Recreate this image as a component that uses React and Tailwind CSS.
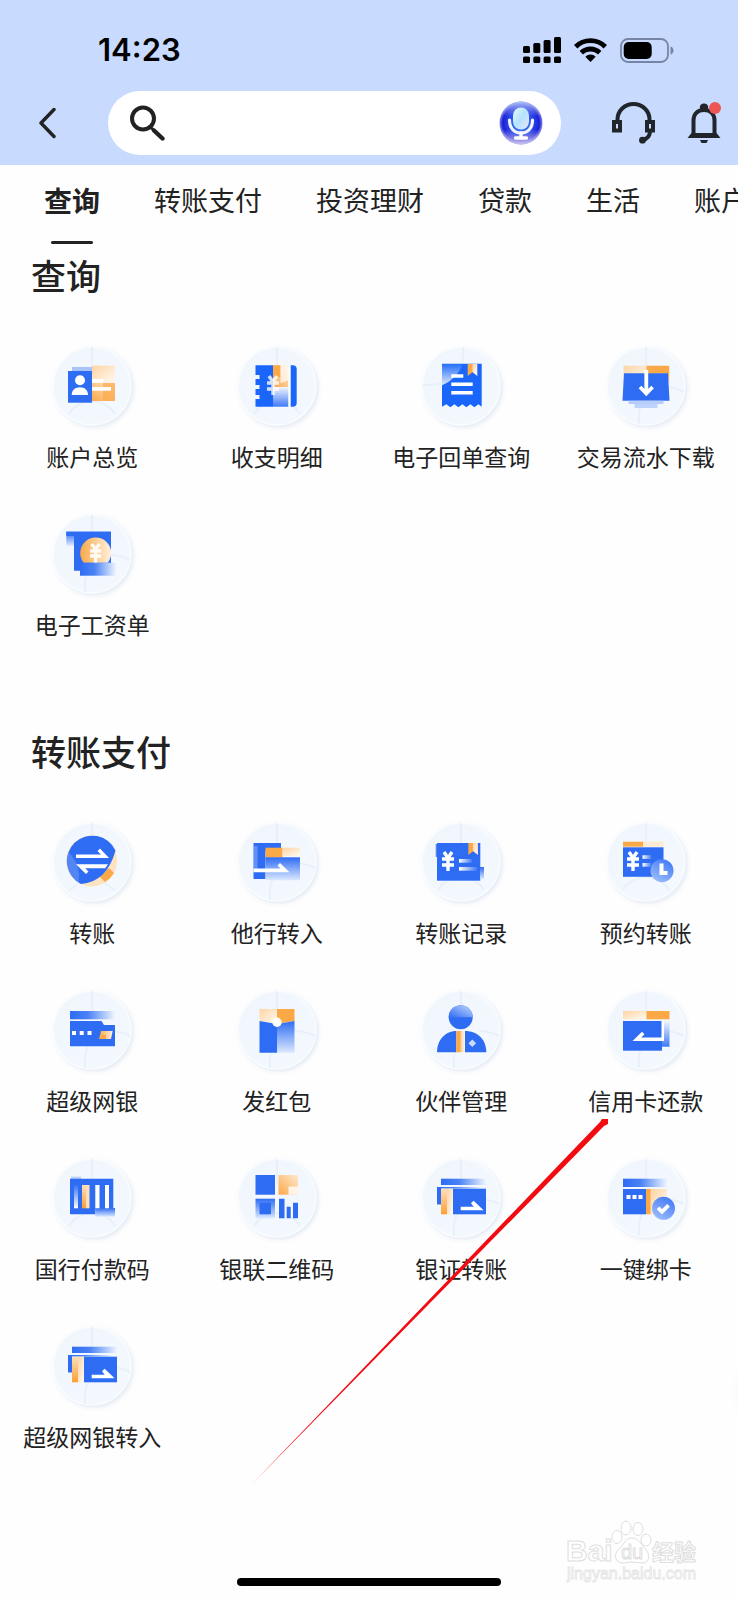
import clsx from "clsx";

const tabs = ["查询", "转账支付", "投资理财", "贷款", "生活", "账户"];

const BLUE = "#2e6cf3";
const ORANGE = "#fba847";
const LIGHT_ORANGE = "#fedfb9";

// shared gradients, referenced by id from every icon
const Gradients = () => (
  <svg className="absolute h-0 w-0" aria-hidden="true">
    <defs>
      <linearGradient id="disc" x1="0" y1="0" x2="1" y2="1">
        <stop offset="0" stopColor="#f1f6fd" />
        <stop offset="1" stopColor="#f3f9ff" />
      </linearGradient>
      <linearGradient id="blueRight" x1="0" y1="0" x2="1" y2="0">
        <stop offset="0" stopColor={BLUE} />
        <stop offset="0.4" stopColor="#4b82f5" />
        <stop offset="1" stopColor="#eef5ff" />
      </linearGradient>
      <linearGradient id="blueDown" x1="0" y1="0" x2="0" y2="1">
        <stop offset="0" stopColor={BLUE} />
        <stop offset="1" stopColor="#dce9ff" />
      </linearGradient>
      <linearGradient id="blueUp" x1="0" y1="1" x2="0" y2="0">
        <stop offset="0" stopColor="#3f7af5" />
        <stop offset="1" stopColor="#f1f6ff" />
      </linearGradient>
      <linearGradient id="blueSoft" x1="0" y1="1" x2="1" y2="0">
        <stop offset="0" stopColor="#2e6cf3" />
        <stop offset="1" stopColor="#c3d7fe" />
      </linearGradient>
      <linearGradient id="orangeRight" x1="0" y1="0" x2="1" y2="0">
        <stop offset="0" stopColor={ORANGE} />
        <stop offset="1" stopColor="#fff1de" />
      </linearGradient>
      <linearGradient id="orangeDiag" x1="0" y1="1" x2="1" y2="0">
        <stop offset="0" stopColor={ORANGE} />
        <stop offset="1" stopColor="#ffe9cf" />
      </linearGradient>
      <linearGradient id="orangeFade" x1="0" y1="0" x2="1" y2="1">
        <stop offset="0" stopColor="#fdd4a3" />
        <stop offset="1" stopColor="#fffaf3" />
      </linearGradient>
      <linearGradient id="orangeDown" x1="0" y1="0" x2="0" y2="1">
        <stop offset="0" stopColor={LIGHT_ORANGE} />
        <stop offset="1" stopColor="#fb9f35" />
      </linearGradient>
      <linearGradient id="whiteRight" x1="0" y1="0" x2="1" y2="0">
        <stop offset="0" stopColor="#fff" />
        <stop offset="1" stopColor="#fff" stopOpacity="0.1" />
      </linearGradient>
      <linearGradient id="whiteDown" x1="0" y1="0" x2="0" y2="1">
        <stop offset="0" stopColor="#fff" stopOpacity="0.05" />
        <stop offset="1" stopColor="#fff" />
      </linearGradient>
      <linearGradient id="badge" x1="0.8" y1="0" x2="0.2" y2="1">
        <stop offset="0" stopColor="#3f78f5" />
        <stop offset="1" stopColor="#9fc0fd" />
      </linearGradient>
      <radialGradient id="micBall" cx="0.5" cy="0.5" r="0.5">
        <stop offset="0" stopColor="#41a6f5" />
        <stop offset="0.55" stopColor="#2a4be8" />
        <stop offset="0.85" stopColor="#1c1fd6" />
        <stop offset="1" stopColor="#7f86e6" />
      </radialGradient>
      <linearGradient id="micShine" x1="0" y1="0" x2="0" y2="1">
        <stop offset="0" stopColor="#a9bdf8" />
        <stop offset="0.35" stopColor="#a9bdf8" stopOpacity="0" />
        <stop offset="0.65" stopColor="#c9c2f0" stopOpacity="0" />
        <stop offset="1" stopColor="#c9c2f0" />
      </linearGradient>
      <linearGradient id="micBody" x1="0" y1="0" x2="1" y2="1">
        <stop offset="0" stopColor="#e4fbff" />
        <stop offset="0.5" stopColor="#b4e3fc" />
        <stop offset="1" stopColor="#efe6ff" />
      </linearGradient>
    </defs>
  </svg>
);

const Yen = ({ x, y, opacity = 1 }) => (
  <path
    d={`M${x - 4} ${y - 9}l4 6l4 -6M${x - 6} ${y - 2}h12M${x - 6} ${y + 4}h12M${x} ${y - 3}v13`}
    fill="none"
    stroke="#fff"
    strokeWidth="3.4"
    opacity={opacity}
  />
);

const Bookmark = ({ x, y }) => (
  <>
    <path d={`M${x} ${y}h5v8l-5 4z`} fill={ORANGE} />
    <path d={`M${x + 4.6} ${y}h5v12l-5 -4z`} fill="url(#orangeFade)" />
  </>
);

// same drawing is used by 银证转账 and 超级网银转入
const CardTransfer = () => (
  <>
    <rect x="20" y="20.7" width="45" height="6.3" fill="url(#blueRight)" />
    <path d="M16 29h44v1.6H20v15.7h-4z" fill="url(#blueRight)" />
    <rect x="16" y="29" width="4.2" height="17.3" fill={BLUE} />
    <rect x="20" y="30.7" width="6" height="25.6" fill="url(#orangeDown)" />
    <rect x="26" y="30.7" width="5.7" height="25.6" fill="url(#orangeFade)" />
    <rect x="32" y="30.7" width="33" height="25.6" fill={BLUE} />
    <path d="M39.7 48.7h13l-2.7 -3.4l2.6 -2.6l10 9.6h-22.9z" fill="#fff" />
  </>
);

const drawings = {
  overview: (
    <>
      <rect x="20" y="21" width="20" height="5" fill="#a8c3fb" />
      <rect x="16" y="25" width="24" height="31.7" fill={BLUE} />
      <circle cx="28" cy="34.3" r="5" fill="#fff" />
      <path d="M19.7 49c0-5 3.6-7.7 8.2-7.7s8.1 2.7 8.1 7.7z" fill="#fff" />
      <rect x="40" y="19.7" width="23" height="17.5" fill="url(#orangeFade)" />
      <rect x="40" y="37" width="23" height="18" fill="url(#orangeDiag)" />
      <rect x="51" y="37" width="12" height="18" fill={ORANGE} opacity="0.7" />
      <rect x="40" y="33" width="11.5" height="3.7" fill="#fff" />
      <rect x="40" y="41" width="19" height="3.7" fill="#fff" />
    </>
  ),
  ledger: (
    <>
      <path
        d="M18.5 19.3h17.5v41.4h-17.5v-7.7h4v-4h-4v-6h4v-4h-4v-6h4v-4h-4z"
        fill="#1a66fa"
      />
      <rect x="36" y="19.3" width="15.5" height="22" fill="url(#orangeDiag)" />
      <rect x="36" y="19.3" width="7.5" height="12" fill={ORANGE} />
      <path d="M43.5 19.3h8v15l-8 3z" fill="#fff8ef" opacity="0.8" />
      <rect x="36" y="41" width="15.5" height="19.7" fill="url(#blueUp)" />
      <path d="M51.5 19.3h2.5v41.4h-2.5z" fill="#fff" />
      <path d="M53.7 19.3h2a4 4 0 0 1 4 4v33.4a4 4 0 0 1 -4 4h-2z" fill="#1a66fa" />
      <Yen x={36} y={39} opacity={0.8} />
    </>
  ),
  receipt: (
    <>
      <path
        d="M21 17.7h39.7v43l-3.3 -2.5l-4 3l-4 -3l-4 3l-4 -3l-4 3l-4 -3l-4 3l-4 -3l-4.4 2.5z"
        fill="#1a66fa"
      />
      <path d="M21 17.7h21a38 38 0 0 1 -21 21.5z" fill="url(#whiteDown)" opacity="0.85" />
      <Bookmark x={46.7} y={18} />
      <path d="M30.3 30h12M30.3 38.3h21.4M30.3 46.7h21.4" stroke="#fff" strokeWidth="3.5" />
    </>
  ),
  download: (
    <>
      <path d="M17.5 19.7h23v8h-22l-1 10z" fill="url(#orangeFade)" />
      <path d="M40.5 19.7h22.7v18.3l-1.5 -10.5h-21.2z" fill={ORANGE} />
      <path d="M18 27.3h44l1.5 27.4h-47z" fill={BLUE} />
      <rect x="22.5" y="54.7" width="35" height="3.3" fill="#b7cdfc" />
      <rect x="28.5" y="58" width="23" height="4" fill="#bfd3fc" />
      <path d="M40.3 24v23M34 41l6.3 6.5l6.3 -6.5" fill="none" stroke="#fff" strokeWidth="3.8" />
    </>
  ),
  payslip: (
    <>
      <rect x="14.3" y="17.7" width="8" height="14" fill="url(#blueDown)" />
      <rect x="14.3" y="17.7" width="44.7" height="4.3" fill={BLUE} />
      <path d="M22 17.7h37v33h-31v6h-6z" fill={BLUE} />
      <path d="M31.6 48.7a15.5 15.5 0 1 1 24.2 0z" fill="url(#orangeRight)" />
      <path
        d="M39.5 30l4 5l4 -5M38 37h11M38 42h11M43.5 35v14"
        fill="none"
        stroke="#fff"
        strokeWidth="3.4"
        opacity="0.9"
      />
      <rect x="28" y="48.7" width="36" height="13" fill="url(#blueRight)" />
    </>
  ),
  transfer: (
    <>
      <circle cx="39.7" cy="39" r="25.5" fill="#fee3c3" />
      <path d="M48 55l9 -9l5 5a27 27 0 0 1 -9 9z" fill={ORANGE} />
      <path d="M63.5 28.5a25.5 25.5 0 1 0 -34.5 33.5q26 -2 34.5 -33.5z" fill={BLUE} />
      <path d="M16.5 30a26 26 0 0 0 10 30.5q3 -17 -10 -30.5z" fill="#fff" opacity="0.18" />
      <path d="M24 32.5h25l-3.5 -3.5l2.5 -2.5l9 9.5h-33z" fill="#fff" />
      <path d="M56 42.3h-32l10 9.7l2.5 -2.5l-3.3 -3.2h20z" fill="#fff" />
    </>
  ),
  inbound: (
    <>
      <path d="M16.5 21h27.5v8h-15.5v28h-12z" fill={BLUE} />
      <path d="M17 24h3.5v24h-3.5z" fill="#fff" opacity="0.25" />
      <rect x="28.5" y="25.7" width="17" height="10" fill={ORANGE} />
      <rect x="45.5" y="25.7" width="17.5" height="8.6" fill="url(#orangeFade)" />
      <rect x="28.5" y="35.3" width="34.5" height="23" fill="url(#blueDown)" />
      <path d="M16.5 46.5h27l-3 -3l2.5 -2.5l9.5 9.2h-36z" fill="#fff" />
    </>
  ),
  record: (
    <>
      <path d="M14.7 22h3v13h-3z" fill={BLUE} opacity="0.8" />
      <rect x="16" y="21" width="43.3" height="37.7" fill={BLUE} />
      <rect x="59" y="45" width="4" height="12" fill="url(#blueDown)" />
      <Bookmark x={47.3} y={21} />
      <Yen x={27} y={39} />
      <rect x="38" y="37" width="13" height="3.7" fill="url(#whiteRight)" />
      <rect x="38" y="45" width="18" height="3.7" fill="url(#whiteRight)" />
    </>
  ),
  schedule: (
    <>
      <rect x="17" y="19.7" width="20.5" height="5" fill={ORANGE} />
      <rect x="37" y="19.7" width="20.5" height="5" fill="#fee9d1" />
      <rect x="17" y="25.3" width="40.5" height="29.5" fill={BLUE} />
      <Yen x={27} y={39} />
      <rect x="36.5" y="33.2" width="9" height="3.7" fill="url(#whiteRight)" />
      <rect x="36.5" y="41" width="9" height="3.7" fill="url(#whiteRight)" />
      <circle cx="56" cy="48.7" r="11.5" fill="url(#badge)" />
      <path d="M55.5 41.5v9.5h6" fill="none" stroke="#fff" strokeWidth="4" />
    </>
  ),
  netbank: (
    <>
      <rect x="18" y="21" width="45" height="8.3" fill="url(#blueRight)" />
      <path d="M18 31h31.5l2.5 4h11v21.3h-45z" fill={BLUE} />
      <path d="M20 41h4v4h-4zM27.7 41h4v4h-4zM35.5 41h4v4h-4z" fill="#fff" />
      <path d="M49 41h11.7l-1.7 8h-11.7z" fill="url(#orangeRight)" />
      <path d="M48 45h6v4h-6.7z" fill={ORANGE} />
    </>
  ),
  redPacket: (
    <>
      <path d="M22.5 19h17.5v15l-17.5 -3z" fill="url(#orangeFade)" />
      <path d="M40 19h17.5v12l-17.5 3z" fill={ORANGE} />
      <path d="M22.5 31l17.5 3v28.7h-17.5z" fill={BLUE} />
      <path d="M40 34l17.5 -3v31.7h-17.5z" fill="url(#blueDown)" />
      <circle cx="40" cy="32.3" r="4.7" fill="#fff" />
    </>
  ),
  partner: (
    <>
      <circle cx="39.7" cy="27.3" r="12" fill={BLUE} />
      <path d="M27.7 27.3a12 12 0 0 1 24 0z" fill="url(#blueSoft)" />
      <path d="M16 62.3c0-13 9-21.3 19.3-21.3v21.3z" fill={BLUE} />
      <path d="M65.3 62.3c0-13-9-21.3-21.3-21.3v21.3z" fill={BLUE} />
      <rect x="35.3" y="41" width="4.4" height="21.3" fill={ORANGE} />
      <rect x="39.7" y="41" width="4" height="21.3" fill="url(#orangeRight)" opacity="0.5" />
      <path d="M51.3 49.5l3.8 3.8l-3.8 3.8l-3.8 -3.8z" fill="#fff" opacity="0.75" />
    </>
  ),
  repay: (
    <>
      <rect x="17" y="21" width="23.5" height="8.3" fill="url(#orangeFade)" />
      <rect x="40.5" y="21" width="23" height="8.3" fill={ORANGE} />
      <rect x="55" y="31" width="8.5" height="25.7" fill="url(#blueUp)" />
      <rect x="17" y="31" width="39" height="29.7" fill={BLUE} />
      <path d="M55.5 31h2.5v20h-31.5l9.5 -9.3l2.5 2.5l-3.3 3.3h20.3z" fill="#fff" />
    </>
  ),
  barcode: (
    <>
      <rect x="19" y="18.7" width="10" height="3" fill="#b9d0fc" />
      <path d="M18 20.7h43.3v30h-18v5.6h-25.3z" fill={BLUE} />
      <rect x="43.3" y="50" width="19.7" height="8.7" fill="url(#blueDown)" />
      <rect x="22" y="27" width="4" height="23.3" fill="url(#whiteDown)" />
      <rect x="30" y="27" width="4" height="23.3" fill="url(#orangeDown)" />
      <rect x="34" y="27" width="3.5" height="23.3" fill={LIGHT_ORANGE} />
      <path d="M43.3 27h4.2v23.3h-4.2zM53 27h4v23.3h-4z" fill="#fff" />
    </>
  ),
  qrcode: (
    <>
      <rect x="18.5" y="17" width="19.5" height="19.7" fill={BLUE} />
      <rect x="41.5" y="17" width="19.5" height="19.7" fill="url(#orangeDiag)" />
      <path d="M51.5 28.5h9.5v8.2h-9.5z" fill="#fff4e6" />
      <rect x="18.5" y="40.7" width="19.5" height="19.6" fill="url(#blueDown)" />
      <rect x="22.5" y="44.7" width="11.5" height="11.6" fill={BLUE} />
      <path
        d="M42 40.7h5.5v19.6h-5.5zM49.7 48.7h4v11.6h-4zM56 44.7h5v15.6h-5z"
        fill={BLUE}
      />
    </>
  ),
  cardTransfer: <CardTransfer />,
  bindCard: (
    <>
      <rect x="17" y="20.7" width="44" height="8.3" fill="url(#blueRight)" />
      <rect x="17" y="31" width="23" height="25.3" fill={BLUE} />
      <rect x="40" y="31" width="5" height="25.3" fill={ORANGE} />
      <rect x="44.5" y="31" width="16.5" height="25.3" fill="url(#orangeFade)" />
      <path d="M20.5 37h4v4h-4zM26.5 37h4v4h-4zM32.5 37h4v4h-4z" fill="#fff" />
      <circle cx="57.5" cy="50.3" r="11.5" fill="url(#badge)" />
      <path d="M52 49.8l4 4l6.5 -6.5" fill="none" stroke="#fff" strokeWidth="3.8" />
    </>
  ),
};

// faint creases on the disc behind each drawing
const creases = {
  dome: "M40 1v26M17 68a27 27 0 0 1 46 0M17 68l5 -7M63 68l-5 -7",
  swirl: "M40 1v28M58 41q10 0 20 5M33 78q-1 -14 3 -22",
  quarter: "M42 1q4 40 -40 38",
  rays: "M40 1v26M17 68l12 -8M63 68l-12 -8",
};

const sections = [
  {
    title: "查询",
    items: [
      { label: "账户总览", icon: "overview", crease: "dome" },
      { label: "收支明细", icon: "ledger", crease: "dome" },
      { label: "电子回单查询", icon: "receipt", crease: "quarter" },
      { label: "交易流水下载", icon: "download", crease: "swirl" },
      { label: "电子工资单", icon: "payslip", crease: "swirl" },
    ],
  },
  {
    title: "转账支付",
    items: [
      { label: "转账", icon: "transfer", crease: "rays" },
      { label: "他行转入", icon: "inbound", crease: "swirl" },
      { label: "转账记录", icon: "record", crease: "dome" },
      { label: "预约转账", icon: "schedule", crease: "dome" },
      { label: "超级网银", icon: "netbank", crease: "swirl" },
      { label: "发红包", icon: "redPacket", crease: "swirl" },
      { label: "伙伴管理", icon: "partner", crease: "swirl" },
      { label: "信用卡还款", icon: "repay", crease: "swirl" },
      { label: "国行付款码", icon: "barcode", crease: "dome" },
      { label: "银联二维码", icon: "qrcode", crease: "dome" },
      { label: "银证转账", icon: "cardTransfer", crease: "swirl" },
      { label: "一键绑卡", icon: "bindCard", crease: "swirl" },
      { label: "超级网银转入", icon: "cardTransfer", crease: "swirl" },
    ],
  },
];

const Tile = ({ label, icon, crease }) => (
  <a href="#" className="flex flex-col items-center">
    <svg viewBox="0 0 80 80" className="h-20 w-20 overflow-visible drop-shadow-[2px_2px_2px_rgba(150,175,215,0.25)]">
      <circle cx="40" cy="40" r="39" fill="url(#disc)" stroke="#fafdff" strokeWidth="1.5" />
      <path d={creases[crease]} fill="none" stroke="#e6edf8" strokeWidth="2" opacity="0.7" />
      {drawings[icon]}
    </svg>
    <span className="mt-3.5 whitespace-nowrap text-[23px] leading-8">{label}</span>
  </a>
);

const StatusBar = () => (
  <div className="flex h-20 items-center pt-5 pr-16 pl-[98px] text-black">
    <span className="flex-1 font-[Inter,sans-serif] text-[31px] font-semibold">14:23</span>
    <div className="flex items-center gap-[13px]">
      <svg viewBox="0 0 38 26" className="h-[26px] w-[38px]">
        <rect x="0" y="9" width="7" height="7" rx="1.5" />
        <rect x="10.3" y="6" width="7" height="10" rx="1.5" />
        <rect x="20.6" y="3" width="7" height="13" rx="1.5" />
        <rect x="31" y="0" width="7" height="16" rx="1.5" />
        <rect x="0" y="19.5" width="7" height="6.5" rx="1.5" />
        <rect x="10.3" y="19.5" width="7" height="6.5" rx="1.5" />
        <rect x="20.6" y="19.5" width="7" height="6.5" rx="1.5" />
        <rect x="31" y="19.5" width="7" height="6.5" rx="1.5" />
      </svg>
      <svg viewBox="0 0 33 24" className="h-6 w-[33px]" fill="none" stroke="#000" strokeWidth="4.8">
        <path d="M1.7 8.8a21 21 0 0 1 29.6 0" />
        <path d="M7.3 14.8a13 13 0 0 1 18.4 0" />
        <path d="M11.3 18.7a7.4 7.4 0 0 1 10.4 0l-5.2 5.2z" fill="#000" stroke="none" />
      </svg>
      <svg viewBox="0 0 54 25" className="h-[25px] w-[54px]">
        <rect x="1" y="1" width="47" height="23" rx="7" fill="none" stroke="#7685a3" strokeWidth="1.8" />
        <rect x="3.7" y="4" width="28" height="17" rx="5" />
        <path d="M50.5 8.5c4 1 4 7 0 8z" fill="#7685a3" />
      </svg>
    </div>
  </div>
);

const SearchBar = () => (
  <div className="flex h-[85px] items-center pr-[17px] pl-[38px]">
    <button aria-label="返回">
      <svg viewBox="0 0 18 32" className="h-8 w-[18px]" fill="none" stroke="#222" strokeWidth="3.4" strokeLinecap="round" strokeLinejoin="round">
        <path d="M16 2.5L3 16L16 29.5" />
      </svg>
    </button>
    <form className="ml-[52px] flex h-16 min-w-0 flex-1 items-center rounded-full bg-white pr-[18px] pl-[22px]">
      <svg viewBox="0 0 35 36" className="h-9 w-[35px] shrink-0" fill="none" stroke="#222" strokeWidth="4" strokeLinecap="round">
        <circle cx="13" cy="13.5" r="11" />
        <path d="M22 23.5l2 2" strokeWidth="3" />
        <path d="M24 25.5l8.5 8" strokeWidth="4.4" />
      </svg>
      <input type="search" aria-label="搜索" className="min-w-0 flex-1 bg-transparent px-3 text-2xl outline-none" />
      <button type="button" aria-label="语音搜索">
        <svg viewBox="0 0 44 44" className="h-11 w-11">
          <circle cx="22" cy="22" r="21.5" fill="url(#micBall)" />
          <circle cx="22" cy="22" r="21.5" fill="url(#micShine)" />
          <rect x="14" y="6.5" width="16" height="22" rx="8" fill="url(#micBody)" />
          <path d="M10.5 19c0 8 4.5 13 11.5 13s11.5-5 11.5-13" fill="none" stroke="#f3f3ff" strokeWidth="3.2" strokeLinecap="round" />
          <path d="M22 32v5M16.5 37h11" stroke="#fff" strokeWidth="3.4" strokeLinecap="round" />
        </svg>
      </button>
    </form>
    <button aria-label="客服" className="ml-[51px]">
      <svg viewBox="0 0 43 42" className="h-[42px] w-[43px]" fill="none" stroke="#20242b" strokeWidth="4">
        <path d="M5.5 19v-1.5a16 15.5 0 0 1 32 0V19" />
        <rect x="2" y="20" width="6" height="8.5" />
        <rect x="35" y="20" width="6" height="8.5" />
        <path d="M38 29c0 6-3 8-7.5 9" />
        <circle cx="30.5" cy="38.2" r="3.4" fill="#20242b" stroke="none" />
      </svg>
    </button>
    <button aria-label="消息" className="relative ml-8">
      <svg viewBox="0 0 34 42" className="h-[42px] w-[34px]" fill="none" stroke="#20242b" strokeWidth="4">
        <path d="M6.5 34V18.5c0-7 4.5-10.5 10.5-10.5s10.5 3.5 10.5 10.5V34" />
        <path d="M0.5 36l4 -5h25l4 5z" fill="#20242b" stroke="none" />
        <path d="M17 1.5a3.8 3.8 0 0 0 -3.8 5.5h7.6a3.8 3.8 0 0 0 -3.8 -5.5z" fill="#20242b" stroke="none" />
        <path d="M13 38h8l-1.5 3h-5z" fill="#20242b" stroke="none" />
      </svg>
      <span className="absolute top-0 right-0 h-3 w-3 rounded-full bg-[#ee5655]" />
    </button>
  </div>
);

const Watermark = () => (
  <svg viewBox="0 0 134 66" className="absolute right-[38px] bottom-4 h-[66px] w-[134px]" fill="#fff" stroke="#dedede" strokeWidth="1" aria-hidden="true">
    <text x="0" y="43" fontSize="30" fontWeight="700" fontFamily="Liberation Sans, sans-serif">Bai</text>
    <ellipse cx="51" cy="19" rx="5" ry="6.5" />
    <ellipse cx="60" cy="10" rx="5" ry="7" />
    <ellipse cx="72" cy="11" rx="5" ry="6.5" />
    <ellipse cx="80" cy="22" rx="5" ry="6" />
    <path d="M66 20c-7 0-8 7-13 11s-5 13 3 14c4 0 6-1 10-1s7 1 11 1c7-1 7-9 3-13s-7-12-14-12z" />
    <text x="55" y="41" fontSize="20" fontFamily="Liberation Sans, sans-serif">du</text>
    <text x="86" y="42" fontSize="22" fontWeight="700" fontFamily="Noto Sans CJK SC, sans-serif">经验</text>
    <text x="1" y="61" fontSize="16" strokeWidth="0.8" stroke="#e4e4e4" fontFamily="Liberation Sans, sans-serif">jingyan.baidu.com</text>
  </svg>
);

export default function App() {
  return (
    <div className="relative flex min-h-screen flex-col overflow-hidden bg-[#fefefe] font-['Noto_Sans_CJK_SC',sans-serif] text-[#222]">
      <Gradients />
      <header className="bg-[#c8dbff]">
        <StatusBar />
        <SearchBar />
      </header>

      <nav className="flex gap-[54px] overflow-hidden pt-4 pb-2 pl-11">
        {tabs.map((tab, i) => (
          <button key={tab} className="flex shrink-0 flex-col items-center">
            <span className={clsx("whitespace-nowrap leading-[38px]", i === 0 ? "text-[28px] font-bold" : "text-[27px]")}>{tab}</span>
            {i === 0 && <span className="mt-[22px] h-[3px] w-[42px] rounded-full bg-[#222]" />}
          </button>
        ))}
      </nav>

      <main className="flex flex-1 flex-col gap-[88px]">
        {sections.map((section) => (
          <section key={section.title}>
            <h2 className="pl-[31px] text-[35px] leading-[46px] font-medium">{section.title}</h2>
            <div className="mt-12 grid grid-cols-4 gap-y-[42px]">
              {section.items.map((item) => (
                <Tile key={item.label} {...item} />
              ))}
            </div>
          </section>
        ))}
      </main>

      <div className="mx-auto mb-3.5 h-2 w-[264px] rounded-full bg-black" />

      {/* floating button parked just past the right edge, only its shadow shows */}
      <div className="absolute top-[1360px] -right-[68px] h-16 w-16 rounded-full shadow-[0_0_14px_rgba(0,0,0,0.08)]" />

      {/* pointer to 信用卡还款 */}
      <svg viewBox="0 0 360 370" className="pointer-events-none absolute top-[1117px] left-[250px] h-[370px] w-[360px]" aria-hidden="true">
        <path d="M2 367L350 5l2 -3h6v5l-4 2z" fill="#f30b12" />
      </svg>
      <Watermark />
    </div>
  );
}
